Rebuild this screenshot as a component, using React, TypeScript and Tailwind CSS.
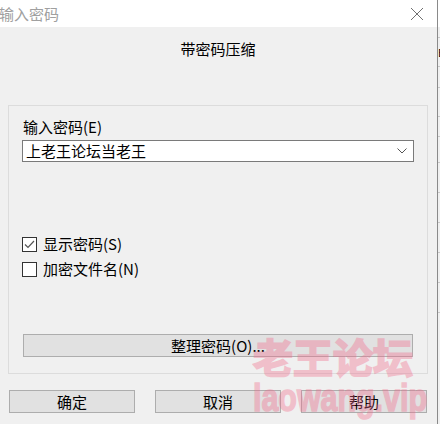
import React from "react";

const font = { fontFamily: '"Noto Sans CJK SC", "Noto Sans", sans-serif' };

const Btn = ({ children, className = "" }: { children: React.ReactNode; className?: string }) => (
  <div
    className={`h-[23px] border border-[#adadad] bg-[#e1e1e1] flex items-center justify-center text-[15px] leading-[20px] text-black ${className}`}
  >
    {children}
  </div>
);

const CheckRow = ({ label, checked }: { label: string; checked?: boolean }) => (
  <div className="flex items-center h-[20px] pl-[13px]">
    <div className="w-[15px] h-[15px] border border-[#333] bg-white flex items-center justify-center">
      {checked && (
        <svg width="11" height="9" viewBox="0 0 11 9">
          <path d="M1 4.5 L4 7.5 L10 1" fill="none" stroke="#555" strokeWidth="1.2" />
        </svg>
      )}
    </div>
    <span className="ml-[6px] text-[15px] leading-[20px] text-black">{label}</span>
  </div>
);

export default function App() {
  return (
    <div className="w-[440px] h-[424px] flex overflow-hidden bg-[#f0f0f0] relative" style={font}>
      <div className="w-[437px] shrink-0 flex flex-col">
        {/* title bar */}
        <div className="h-[27px] bg-white flex items-center justify-between">
          <span className="text-[15px] leading-[20px] text-[#a0a0a0] -ml-[1px]">输入密码</span>
          <svg width="14" height="14" viewBox="0 0 14 14" className="mr-[13px]">
            <path d="M1 1 L13 13 M13 1 L1 13" stroke="#707070" strokeWidth="1" />
          </svg>
        </div>

        <div className="mt-[12px] h-[20px] text-center text-[15px] leading-[20px] text-black pr-[1px]">
          带密码压缩
        </div>

        {/* group box */}
        <div className="mt-[46px] ml-[8px] w-[420px] h-[269px] border border-[#dcdcdc] flex flex-col">
          <div className="mt-[11px] pl-[14px] h-[20px] text-[15px] leading-[20px] text-black">输入密码(E)</div>
          <div className="mt-[3px] ml-[13px] w-[392px] h-[22px] border border-[#7a7a7a] bg-white flex items-center justify-between">
            <span className="pl-[3px] text-[15px] leading-[20px] text-black">上老王论坛当老王</span>
            <svg width="10" height="6" viewBox="0 0 10 6" className="mr-[6px]">
              <path d="M0.5 0.5 L5 5 L9.5 0.5" fill="none" stroke="#555" strokeWidth="1" />
            </svg>
          </div>
          <div className="mt-[72px]">
            <CheckRow label="显示密码(S)" checked />
          </div>
          <div className="mt-[5px]">
            <CheckRow label="加密文件名(N)" />
          </div>
          <Btn className="mt-[55px] ml-[14px] w-[390px]">整理密码(O)...</Btn>
        </div>

        {/* bottom buttons */}
        <div className="mt-[16px] pl-[9px] flex gap-[20px]">
          <Btn className="w-[126px]">确定</Btn>
          <Btn className="w-[126px]">取消</Btn>
          <Btn className="w-[126px]">帮助</Btn>
        </div>
      </div>

      {/* background window sliver */}
      <div className="w-[1px] shrink-0 bg-[#8a8a8a]" />
      <div className="flex-1 flex flex-col">
        <div className="h-[27px] bg-white" />
        <div className="h-[11px] border-b border-[#c8c8c8]" />
        <div className="h-[29px] border-b border-[#c8c8c8] flex items-center text-[11px] leading-none text-black">E</div>
        <div className="h-[21px] border-b border-[#c8c8c8]" />
        <div className="h-[29px] border-b border-[#c8c8c8]" />
        <div className="h-[20px] border-b border-[#c8c8c8]" />
        <div className="h-[26px] border-b border-[#c8c8c8]" />
        <div className="h-[30px] border-b border-[#c8c8c8]" />
        <div className="h-[30px] border-b border-[#c8c8c8]" />
        <div className="h-[30px] border-b border-[#c8c8c8]" />
        <div className="h-[30px] border-b border-[#c8c8c8]" />
        <div className="h-[30px] border-b border-[#c8c8c8]" />
      </div>

      {/* watermark */}
      <div className="absolute left-[253px] top-[332px] pointer-events-none select-none flex flex-col opacity-[0.36] text-[#f26a8a]">
        <span className="text-[40px] leading-[48px] font-bold [-webkit-text-stroke:2px_#f26a8a]">
          老王论坛
        </span>
        <span
          className="text-[38px] leading-[40px] font-bold [-webkit-text-stroke:1.5px_#f26a8a] origin-left scale-x-[0.8] -mt-[2px]"
          style={{ fontFamily: '"Liberation Sans", Arial, sans-serif' }}
        >
          laowang.vip
        </span>
      </div>
    </div>
  );
}
